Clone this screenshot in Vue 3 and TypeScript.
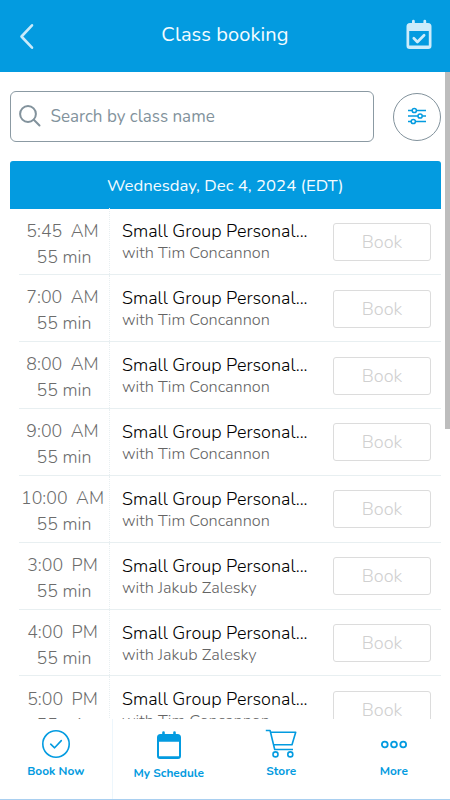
<script setup lang="ts">
interface ClassItem {
  time: string
  period: string
  instructor: string
}

const classes: ClassItem[] = [
  { time: '5:45', period: 'AM', instructor: 'Tim Concannon' },
  { time: '7:00', period: 'AM', instructor: 'Tim Concannon' },
  { time: '8:00', period: 'AM', instructor: 'Tim Concannon' },
  { time: '9:00', period: 'AM', instructor: 'Tim Concannon' },
  { time: '10:00', period: 'AM', instructor: 'Tim Concannon' },
  { time: '3:00', period: 'PM', instructor: 'Jakub Zalesky' },
  { time: '4:00', period: 'PM', instructor: 'Jakub Zalesky' },
  { time: '5:00', period: 'PM', instructor: 'Tim Concannon' },
]
</script>

<template>
  <div class="screen">
    <header class="topbar">
      <button class="icon-button" aria-label="Back">
        <svg width="16" height="28" viewBox="0 0 16 28" fill="none" stroke="#c9eafa" stroke-width="2.6" stroke-linecap="round" stroke-linejoin="round"><path d="M14 3.300 3.500 14.500 14 25.700" /></svg>
      </button>
      <h1>Class booking</h1>
      <button class="icon-button" aria-label="My bookings">
        <svg width="26" height="30" viewBox="0 0 26 30"><path fill="#cdecfb" fill-rule="evenodd" d="M6 1.2a1.4 1.4 0 0 1 2.8 0V3h8.6V1.2a1.4 1.4 0 0 1 2.8 0V3H22a3.5 3.5 0 0 1 3.5 3.5v19.3A3.2 3.2 0 0 1 22.3 29H3.7a3.2 3.2 0 0 1-3.2-3.2V6.500A3.500 3.500 0 0 1 4 3h2ZM3.200 11v14.500h19.600V11Z" /><path d="m7.800 18.300 3.600 3.700 6.700-6.800" fill="none" stroke="#cdecfb" stroke-width="2.700" stroke-linecap="round" stroke-linejoin="round" /></svg>
      </button>
    </header>

    <main class="content">
      <div class="search-row">
        <label class="search">
          <svg width="23" height="23" viewBox="0 0 23 23" fill="none" stroke="#82929c" stroke-width="2" stroke-linecap="round"><circle cx="9" cy="9" r="7.900" /><path d="m14.800 14.800 5.700 5.700" /></svg>
          <span>Search by class name</span>
        </label>
        <button class="filter" aria-label="Filters">
          <svg width="20" height="20" viewBox="0 0 20 20" fill="none" stroke="#039be0" stroke-width="1.500"><path d="M1 3.500h4M9.500 3.500H19M1 9h10M15.300 9H19M1 14.500h3.200M8.500 14.500H19" /><circle cx="7.300" cy="3.500" r="2.100" /><circle cx="13.100" cy="9" r="2.100" /><circle cx="6.300" cy="14.500" r="2.100" /></svg>
        </button>
      </div>

      <section class="schedule">
        <h2>Wednesday, Dec 4, 2024 (EDT)</h2>
        <ul>
          <li v-for="item in classes" :key="item.time + item.period" class="row">
            <div class="when">
              <div class="time"><span>{{ item.time }}</span><span>{{ item.period }}</span></div>
              <div>55 min</div>
            </div>
            <div class="info">
              <div class="name">Small Group Personal...</div>
              <div class="instructor">with {{ item.instructor }}</div>
            </div>
            <button class="book">Book</button>
          </li>
        </ul>
      </section>
      <div class="scroll-thumb"></div>
    </main>

    <nav class="tabs">
      <a class="tab tab-first">
        <svg width="30" height="30" viewBox="0 0 30 30" fill="none" stroke="#039be0" stroke-width="1.600" stroke-linecap="round" stroke-linejoin="round"><circle cx="15" cy="15" r="13.200" /><path d="m9.700 15.200 3.900 3.600 6.700-7.200" /></svg>
        <span>Book Now</span>
      </a>
      <a class="tab tab-schedule">
        <svg width="30" height="30" viewBox="0 0 30 30"><path fill="#039be0" fill-rule="evenodd" d="M8.200 3.500a1.300 1.300 0 0 1 2.600 0V5h8.400V3.500a1.300 1.300 0 0 1 2.600 0V5h1.700A3.500 3.500 0 0 1 27 8.500v18.600a3 3 0 0 1-3 3H6a3 3 0 0 1-3-3V8.500A3.500 3.500 0 0 1 6.500 5h1.700ZM5 12.800v14.500h20V12.800Z" /></svg>
        <span>My Schedule</span>
      </a>
      <a class="tab">
        <svg width="32" height="30" viewBox="0 0 32 30" fill="none" stroke="#039be0" stroke-width="1.600" stroke-linejoin="round"><path d="M.8 1.500h4.300l4.600 19h18.300M5.700 3.300h25L27 15.700H8.700" /><circle cx="10.500" cy="25.400" r="2.500" /><circle cx="25.300" cy="25.400" r="2.500" /></svg>
        <span>Store</span>
      </a>
      <a class="tab">
        <svg width="30" height="30" viewBox="0 0 30 30" fill="none" stroke="#039be0" stroke-width="1.800"><circle cx="5.800" cy="15.500" r="2.900" /><circle cx="15" cy="15.500" r="2.900" /><circle cx="24.200" cy="15.500" r="2.900" /></svg>
        <span>More</span>
      </a>
    </nav>
  </div>
</template>

<style>
body {
  margin: 0;
  background: #fff;
}
</style>

<style scoped>
.screen {
  width: 450px;
  height: 800px;
  display: flex;
  flex-direction: column;
  overflow: hidden;
  background: #fff;
  font-family: Nunito, Lato, sans-serif;
}
button {
  font-family: inherit;
  background: none;
  margin: 0;
  padding: 0;
}
svg {
  display: block;
  flex: none;
  overflow: visible;
}
.topbar {
  box-sizing: border-box;
  flex: none;
  height: 72px;
  padding: 0 18px;
  display: flex;
  align-items: center;
  justify-content: space-between;
  background: #039be0;
  color: #f2fbff;
}
.topbar h1 {
  margin: -3px 0 0 10px;
  font-size: 20px;
  font-weight: 400;
  letter-spacing: 0.1px;
}
.icon-button {
  border: 0;
}
.icon-button:last-child svg {
  margin-top: -2px;
}
.content {
  position: relative;
  flex: 1;
  min-height: 0;
  overflow: hidden;
}
.search-row {
  display: flex;
  align-items: center;
  justify-content: space-between;
  height: 51px;
  padding: 19px 9px 0 9.500px;
}
.search {
  box-sizing: border-box;
  width: 364px;
  height: 51px;
  padding-left: 8px;
  display: flex;
  align-items: center;
  gap: 9px;
  border: 1px solid #8b9aa3;
  border-radius: 6px;
  color: #82929c;
  font-size: 17px;
}
.filter {
  width: 48px;
  height: 48px;
  display: grid;
  place-items: center;
  border: 1px solid #82929c;
  border-radius: 50%;
}
.schedule {
  margin: 19px 9px 0 9.500px;
}
.schedule h2 {
  margin: 0;
  height: 48px;
  line-height: 49px;
  border-radius: 3px 3px 0 0;
  background: #039be0;
  color: #f4fbff;
  text-align: center;
  font-size: 16.800px;
  font-weight: 400;
}
.schedule ul {
  list-style: none;
  margin: -0.8px 0 0;
  padding: 0 0 0 9.500px;
}
.row {
  box-sizing: border-box;
  height: 66.9px;
  display: flex;
  border-bottom: 1px solid #e8eff1;
}
.when {
  box-sizing: border-box;
  flex: none;
  width: 91px;
  padding: 9.300px 0 0;
  border-right: 1px dotted #e8eff1;
  color: #6c6c6c;
  text-align: center;
  font-size: 17.800px;
  font-weight: 300;
  line-height: 26px;
  white-space: nowrap;
}
.time {
  display: flex;
  justify-content: center;
  gap: 8.500px;
  margin-left: -3px;
}
.info {
  box-sizing: border-box;
  flex: none;
  width: 211px;
  padding: 11px 0 0 12px;
  white-space: nowrap;
}
.name {
  color: #000;
  font-size: 18px;
  font-weight: 300;
  line-height: 24px;
}
.instructor {
  color: #646464;
  font-size: 16.300px;
  font-weight: 300;
  line-height: 21.400px;
}
.book {
  box-sizing: border-box;
  width: 98px;
  height: 38px;
  margin: 14.600px 0 0 12px;
  border: 1px solid #dcdcdc;
  border-radius: 3px;
  color: #d0d0d0;
  font-size: 18px;
  font-weight: 300;
}
.scroll-thumb {
  position: absolute;
  top: 0;
  right: 0;
  width: 5px;
  height: 357px;
  background: #bdbdbd;
}
.tabs {
  box-sizing: border-box;
  flex: none;
  height: 81px;
  display: grid;
  grid-template-columns: repeat(4, 1fr);
  background: #fff;
  border-bottom: 1px solid #a9cff0;
}
.tab {
  display: flex;
  flex-direction: column;
  align-items: center;
  padding-top: 10px;
  gap: 4px;
  color: #039be0;
  font-size: 11.900px;
  line-height: 16px;
  font-weight: 700;
}
.tab-first {
  border-right: 1px solid #edf6fc;
}
.tab-schedule {
  gap: 5.500px;
}
</style>
